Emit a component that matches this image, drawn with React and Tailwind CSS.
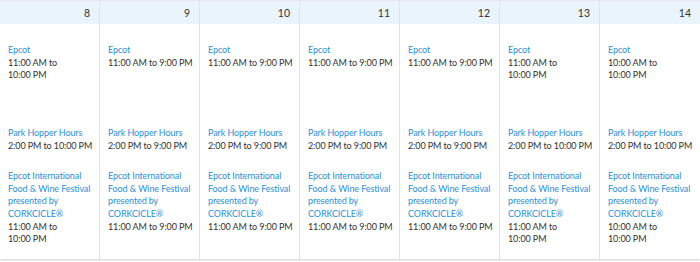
const days = [
  { day: 8, epcot: ['11:00 AM to', '10:00 PM'], hopper: '2:00 PM to 10:00 PM', fest: ['11:00 AM to', '10:00 PM'] },
  { day: 9, epcot: ['11:00 AM to 9:00 PM'], hopper: '2:00 PM to 9:00 PM', fest: ['11:00 AM to 9:00 PM'] },
  { day: 10, epcot: ['11:00 AM to 9:00 PM'], hopper: '2:00 PM to 9:00 PM', fest: ['11:00 AM to 9:00 PM'] },
  { day: 11, epcot: ['11:00 AM to 9:00 PM'], hopper: '2:00 PM to 9:00 PM', fest: ['11:00 AM to 9:00 PM'] },
  { day: 12, epcot: ['11:00 AM to 9:00 PM'], hopper: '2:00 PM to 9:00 PM', fest: ['11:00 AM to 9:00 PM'] },
  { day: 13, epcot: ['11:00 AM to', '10:00 PM'], hopper: '2:00 PM to 10:00 PM', fest: ['11:00 AM to', '10:00 PM'] },
  { day: 14, epcot: ['10:00 AM to', '10:00 PM'], hopper: '2:00 PM to 10:00 PM', fest: ['10:00 AM to', '10:00 PM'] },
]

function DayColumn({ item, last }) {
  return (
    <div className={last ? 'flex flex-col' : 'flex flex-col border-r border-[#dfe5ec]'}>
      <div className="h-[23px] bg-[#eaf4fc] pr-[9px] pt-[5px] text-right text-[10.5px] leading-[14px] text-[#333]">
        {item.day}
      </div>
      <div className="flex-1 whitespace-nowrap pl-[8px] pt-[20px] text-[9px] leading-[12.67px] tracking-[-0.1px] text-[#333]">
        <div className="h-[83px]">
          <div className="text-[#2b8fd6]">Epcot</div>
          {item.epcot.map((line) => (
            <div key={line}>{line}</div>
          ))}
        </div>
        <div className="h-[43px]">
          <div className="text-[#2b8fd6]">Park Hopper Hours</div>
          <div>{item.hopper}</div>
        </div>
        <div>
          <div className="text-[#2b8fd6]">Epcot International</div>
          <div className="text-[#2b8fd6]">Food &amp; Wine Festival</div>
          <div className="text-[#2b8fd6]">presented by</div>
          <div className="text-[#2b8fd6]">CORKCICLE®</div>
          {item.fest.map((line) => (
            <div key={line}>{line}</div>
          ))}
        </div>
      </div>
    </div>
  )
}

export default function App() {
  return (
    <div className="h-[262px] w-[700px] overflow-hidden bg-white font-['Lato',sans-serif]">
      <div className="grid h-[259px] grid-cols-7 border-t border-[#e3e8ee] shadow-[0_1px_2px_rgba(0,0,0,0.2)]">
        {days.map((item, index) => (
          <DayColumn key={item.day} item={item} last={index === days.length - 1} />
        ))}
      </div>
    </div>
  )
}
